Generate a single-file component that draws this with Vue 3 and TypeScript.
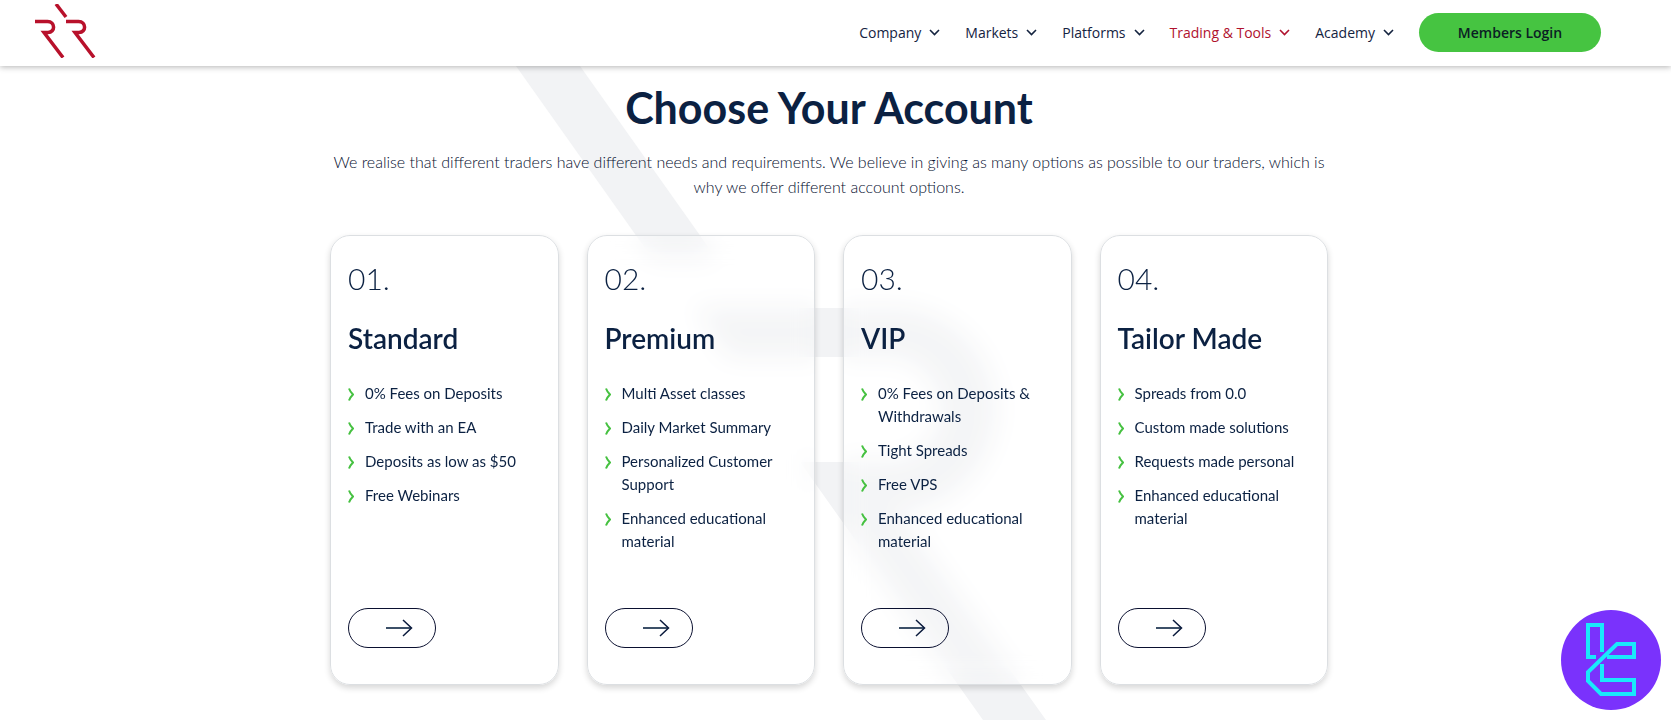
<script setup lang="ts">
interface NavItem {
  label: string
  active?: boolean
}

interface Account {
  number: string
  name: string
  features: string[]
}

const navItems: NavItem[] = [
  { label: 'Company' },
  { label: 'Markets' },
  { label: 'Platforms' },
  { label: 'Trading & Tools', active: true },
  { label: 'Academy' },
]

const accounts: Account[] = [
  {
    number: '01.',
    name: 'Standard',
    features: ['0% Fees on Deposits', 'Trade with an EA', 'Deposits as low as $50', 'Free Webinars'],
  },
  {
    number: '02.',
    name: 'Premium',
    features: [
      'Multi Asset classes',
      'Daily Market Summary',
      'Personalized Customer Support',
      'Enhanced educational material',
    ],
  },
  {
    number: '03.',
    name: 'VIP',
    features: [
      '0% Fees on Deposits & Withdrawals',
      'Tight Spreads',
      'Free VPS',
      'Enhanced educational material',
    ],
  },
  {
    number: '04.',
    name: 'Tailor Made',
    features: [
      'Spreads from 0.0',
      'Custom made solutions',
      'Requests made personal',
      'Enhanced educational material',
    ],
  },
]
</script>

<template>
  <div class="page">
    <header class="header">
      <a class="logo" href="#" aria-label="Home">
        <svg width="61" height="54" viewBox="0 0 61 54" fill="none" stroke="#b8112b" stroke-width="3.5">
          <path d="M21 0 31 13" />
          <path d="M0 17.500H12.500C20.500 17.500 20.500 28.500 13 28.500H9L28 53.500" />
          <path d="M31 17.500H43.500C51.500 17.500 51.500 28.500 44 28.500H40L59 53.500" />
        </svg>
      </a>
      <nav class="nav" aria-label="Main">
        <button
          v-for="item in navItems"
          :key="item.label"
          type="button"
          class="nav-item"
          :class="{ active: item.active }"
          aria-haspopup="true"
        >
          {{ item.label }}
          <svg width="11" height="8" viewBox="0 0 11 8" fill="none" stroke="currentColor" stroke-width="1.600">
            <path d="M1 1 5.500 5.500 10 1" />
          </svg>
        </button>
        <a class="login" href="#">Members Login</a>
      </nav>
    </header>

    <main class="accounts">
      <svg class="watermark" viewBox="499 66 660 654" fill="#f2f3f5" aria-hidden="true">
        <path d="M516 66H580L716 258H652Z" />
        <path
          d="M696 308H890A101.500 101.500 0 0 1 897 511L1046 720H983L800 462H888A52.500 52.500 0 0 0 888 357H729Z"
        />
      </svg>

      <div class="content">
        <h1 class="title">Choose Your Account</h1>
        <p class="lead">
          We realise that different traders have different needs and requirements. We believe in giving as
          many options as possible to our traders, which is why we offer different account options.
        </p>

        <div class="cards">
          <article v-for="account in accounts" :key="account.number" class="card">
            <div class="number">{{ account.number }}</div>
            <h2 class="name">{{ account.name }}</h2>
            <ul class="features">
              <li v-for="feature in account.features" :key="feature">
                <svg width="6" height="13" viewBox="0 0 6 13" fill="none" stroke="#46c141" stroke-width="2">
                  <path d="M1 0.500C2 3.500 3.500 5 5 6.500C3.500 8 2 9.500 1 12.500" />
                </svg>
                <span>{{ feature }}</span>
              </li>
            </ul>
            <a class="more" href="#" :aria-label="`Open ${account.name} account`">
              <svg width="28" height="18" viewBox="0 0 28 18" fill="none" stroke="#0a1a3c">
                <path d="M1 9H26" stroke-width="2" stroke="#3c5068" />
                <path d="M18 1 26.500 9 18 17" stroke-width="1.500" />
              </svg>
            </a>
          </article>
        </div>
      </div>
    </main>

    <button class="badge" type="button" aria-label="Assistant">
      <svg width="100" height="100" viewBox="0 0 100 100" fill="none" stroke="#19e9fb" stroke-width="4">
        <path d="M35 47H27V15H41V42" />
        <path d="M46 47H73V34H56L27 62V71L40 84H73V70H41V54" />
      </svg>
    </button>
  </div>
</template>

<style>
body {
  margin: 0;
  background: #fff;
}
</style>

<style scoped>
.page {
  min-height: 100vh;
  color: #0b2142;
  font-family: Lato, "Open Sans", sans-serif;
}

.header {
  position: relative;
  z-index: 2;
  display: flex;
  align-items: center;
  justify-content: space-between;
  height: 66px;
  padding: 0 70px 0 35px;
  background: #fff;
  box-shadow: 0 1px 6px rgba(0, 0, 0, 0.3);
}

.logo {
  display: flex;
  margin-bottom: 4px;
}

.nav {
  display: flex;
  align-items: center;
  gap: 25px;
  padding-bottom: 1px;
  font-family: "Open Sans", "Noto Sans", sans-serif;
}

.nav-item {
  display: flex;
  align-items: center;
  gap: 8px;
  padding: 0;
  border: 0;
  background: none;
  color: #14233f;
  font: inherit;
  font-size: 14px;
  line-height: 24px;
  cursor: pointer;
}

.nav-item.active {
  color: #b0122e;
}

.login {
  width: 182px;
  border-radius: 20px;
  background: #46c441;
  color: #0b2024;
  font-size: 14px;
  font-weight: 600;
  line-height: 39px;
  text-align: center;
  text-decoration: none;
}

.accounts {
  position: relative;
  padding: 17px 13px 35px 0;
}

.watermark {
  position: absolute;
  top: 0;
  right: 13px;
  left: 0;
  width: 660px;
  height: 654px;
  margin: 0 auto;
}

.content {
  position: relative;
}

.title {
  margin: 0;
  font-size: 43px;
  font-weight: 700;
  line-height: 50px;
  text-align: center;
}

.lead {
  max-width: 1010px;
  margin: 16px auto 36px;
  color: #06102f;
  font-size: 16px;
  font-weight: 300;
  line-height: 25px;
  text-align: center;
}

.cards {
  display: grid;
  grid-template-columns: repeat(4, 1fr);
  gap: 28px;
  max-width: 998px;
  margin: 0 auto;
}

.card {
  display: flex;
  flex-direction: column;
  align-items: flex-start;
  padding: 24px 17px 36px;
  border: 1px solid #dcdfe2;
  border-radius: 20px;
  background: rgba(255, 255, 255, 0.2);
  box-shadow: 0 3px 6px rgba(0, 0, 0, 0.16);
  backdrop-filter: blur(12px);
}

.number {
  font-size: 30px;
  font-weight: 300;
  line-height: 36px;
}

.name {
  margin: 24px 0 26px;
  font-size: 28px;
  font-weight: 600;
  line-height: 36px;
}

.features {
  display: flex;
  flex-direction: column;
  gap: 11px;
  margin: 0 0 55px;
  padding: 0;
  font-size: 15px;
  line-height: 23px;
  list-style: none;
}

.features li {
  display: flex;
  gap: 11px;
}

.features svg {
  flex: none;
  margin-top: 6px;
}

.more {
  display: flex;
  align-items: center;
  justify-content: flex-end;
  width: 88px;
  height: 40px;
  margin-top: auto;
  padding-right: 22px;
  border: 1px solid #0a1030;
  border-radius: 20px;
  box-sizing: border-box;
}

.badge {
  position: fixed;
  right: 10px;
  bottom: 10px;
  z-index: 3;
  display: flex;
  padding: 0;
  border: 0;
  border-radius: 50%;
  background: #7a32fc;
  cursor: pointer;
}
</style>
